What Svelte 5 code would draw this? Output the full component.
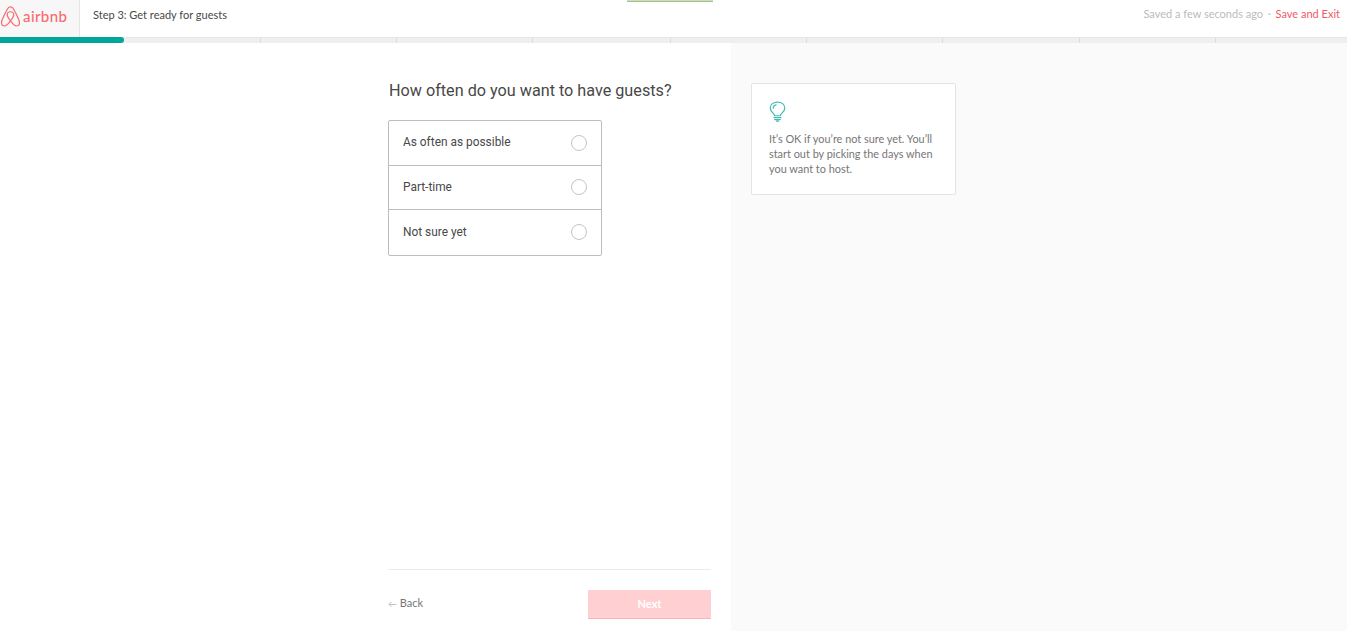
<script>
  const options = ['As often as possible', 'Part-time', 'Not sure yet'];
  const ticks = [260, 396, 532, 670, 806, 942, 1079, 1215];
</script>

<div class="page">
  <header class="top">
    <div class="brand">
      <svg class="belo" viewBox="0 0 20 22" width="19" height="21" aria-hidden="true">
        <path d="M10 15.600C8 13 6.600 10.800 6.600 9.100 6.600 7.200 8 6 10 6s3.400 1.200 3.400 3.100c0 1.700-1.400 3.900-3.400 6.500zm0 0c2.200 2.900 4.400 5.400 6.300 5.400 2.200 0 3.200-1.700 3.200-3.400 0-1.300-.5-2.500-1.100-3.900C16.700 9.700 14.500 5.100 12.700 2.300 12 1.200 11.200.8 10 .8s-2 .4-2.700 1.500C5.500 5.100 3.300 9.700 1.600 13.700 1 15.100.5 16.300.5 17.600.5 19.300 1.500 21 3.700 21c1.900 0 4.100-2.500 6.300-5.400z"/>
      </svg>
      <span class="word">airbnb</span>
    </div>
    <div class="step">Step 3: Get ready for guests</div>
    <div class="save">
      <span class="saved">Saved a few seconds ago</span>
      <span class="dot">·</span>
      <span class="exit">Save and Exit</span>
    </div>
    <div class="toast"></div>
  </header>

  <div class="progress">
    <div class="fill"></div>
    {#each ticks as t}
      <i class="tick" style="left:{t}px"></i>
    {/each}
  </div>

  <main class="body">
    <section class="left">
      <div class="column">
        <h1>How often do you want to have guests?</h1>
        <div class="choices">
          {#each options as o}
            <div class="choice">
              <span>{o}</span>
              <i class="radio"></i>
            </div>
          {/each}
        </div>
        <footer class="actions">
          <div class="back"><span class="arrow">←</span> Back</div>
          <div class="next">Next</div>
        </footer>
      </div>
    </section>
    <aside class="right">
      <div class="tip">
        <svg class="bulb" viewBox="0 0 18 22" width="17" height="21" aria-hidden="true">
          <path d="M6 15.500C6 13 1.300 11.500 1.300 7.500 1.300 3.500 4.700 1 9 1s7.700 2.500 7.700 6.500c0 4-4.700 5.500-4.700 8z"/>
          <path d="M5.500 17.500h7M6 19.500h6M8 21.300h2"/>
          <path d="M4.500 7.500c0-2 1.200-3.200 3-3.500"/>
        </svg>
        <p>It’s OK if you’re not sure yet. You’ll start out by picking the days when you want to host.</p>
      </div>
    </aside>
  </main>
</div>

<style>
  :global(body) {
    margin: 0;
    background: #fff;
  }
  .page {
    height: 631px;
    width: 1347px;
    overflow: hidden;
    display: flex;
    flex-direction: column;
    font-family: Lato, "Open Sans", sans-serif;
    color: #484848;
  }
  .top {
    height: 37px;
    display: flex;
    align-items: stretch;
    position: relative;
    flex: none;
  }
  .brand {
    width: 80px;
    background: #f7f7f7;
    border-right: 1px solid #e4e4e4;
    display: flex;
    align-items: flex-start;
    gap: 3px;
    padding: 6px 0 0 1px;
    box-sizing: border-box;
  }
  .belo {
    fill: none;
    stroke: #fb6a71;
    stroke-width: 1.300;
    flex: none;
  }
  .word {
    font-family: Lato, sans-serif;
    font-size: 15px;
    font-weight: 500;
    line-height: 20px;
    letter-spacing: 0.400px;
    color: #fb6a71;
  }
  .step {
    font-size: 11px;
    padding-left: 13px;
    line-height: 30px;
    color: #484848;
  }
  .save {
    margin-left: auto;
    padding-right: 7px;
    font-size: 11px;
    line-height: 28px;
  }
  .saved { color: #bbb; }
  .dot { color: #bbb; margin: 0 2px; }
  .exit { color: #f0596a; }
  .toast {
    position: absolute;
    left: 627px;
    top: -3px;
    width: 86px;
    height: 5px;
    background: #c9e2b4;
    border-bottom: 1px solid #a9bd97;
    box-sizing: border-box;
  }
  .progress {
    height: 6px;
    flex: none;
    position: relative;
    background: #efefef;
    border-top: 1px solid #e6e6e6;
    box-sizing: border-box;
  }
  .fill {
    position: absolute;
    left: 0;
    top: -1px;
    width: 124px;
    height: 6px;
    background: #00a699;
    border-radius: 0 3px 3px 0;
  }
  .tick {
    position: absolute;
    top: 0;
    width: 1px;
    height: 5px;
    background: #dcdcdc;
  }
  .body {
    flex: 1;
    display: flex;
    min-height: 0;
  }
  .left {
    width: 731px;
    flex: none;
    box-sizing: border-box;
    padding-left: 388px;
  }
  .column {
    width: 323px;
    height: 100%;
    display: flex;
    flex-direction: column;
  }
  h1 {
    margin: 38px 0 0 1px;
    font-family: Roboto, sans-serif;
    font-size: 16.200px;
    line-height: 20px;
    font-weight: 400;
    color: #484848;
  }
  .choices {
    margin-top: 19px;
    width: 214px;
    box-sizing: border-box;
    border: 1px solid #bdbdbd;
    border-radius: 2px;
  }
  .choice {
    height: 44.600px;
    box-sizing: border-box;
    display: flex;
    align-items: center;
    justify-content: space-between;
    padding: 0 14px;
    font-family: Roboto, sans-serif;
    font-size: 11.900px;
    color: #484848;
    border-bottom: 1px solid #bdbdbd;
  }
  .choice span { margin-top: -1px; }
  .choice:last-child { border-bottom: 0; }
  .radio {
    width: 16px;
    height: 16px;
    box-sizing: border-box;
    border: 1px solid #c4c4c4;
    border-radius: 50%;
  }
  .actions {
    margin-top: auto;
    height: 62px;
    box-sizing: border-box;
    border-top: 1px solid #ebebeb;
    display: flex;
    align-items: flex-start;
    justify-content: space-between;
    padding-top: 20px;
  }
  .back {
    font-size: 11px;
    color: #767676;
    line-height: 26px;
  }
  .arrow { font-size: 9px; color: #bbb; }
  .next {
    width: 123px;
    height: 29px;
    line-height: 28px;
    text-align: center;
    background: #ffcfd2;
    border-bottom: 1px solid #f5b5b9;
    box-sizing: border-box;
    color: #fff;
    font-size: 11px;
    font-weight: 700;
    border-radius: 1px;
  }
  .right {
    flex: 1;
    background: #fafafa;
    padding: 40px 0 0 20px;
  }
  .tip {
    width: 205px;
    height: 112px;
    box-sizing: border-box;
    background: #fff;
    border: 1px solid #e4e4e4;
    border-radius: 2px;
    padding: 17px 17px 0;
  }
  .bulb {
    display: block;
    fill: none;
    stroke: #45b8b5;
    stroke-width: 1.300;
    stroke-linecap: round;
  }
  p {
    margin: 9px 0 0;
    font-size: 10.900px;
    line-height: 15px;
    color: #767676;
  }
</style>
